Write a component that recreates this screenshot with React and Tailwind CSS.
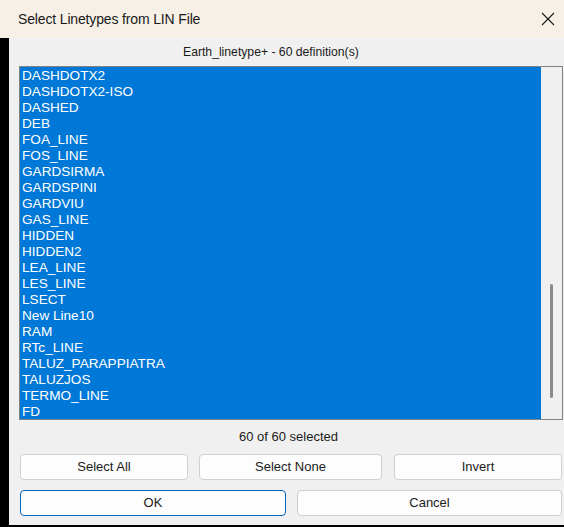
const items = [
  "DASHDOTX2",
  "DASHDOTX2-ISO",
  "DASHED",
  "DEB",
  "FOA_LINE",
  "FOS_LINE",
  "GARDSIRMA",
  "GARDSPINI",
  "GARDVIU",
  "GAS_LINE",
  "HIDDEN",
  "HIDDEN2",
  "LEA_LINE",
  "LES_LINE",
  "LSECT",
  "New Line10",
  "RAM",
  "RTc_LINE",
  "TALUZ_PARAPPIATRA",
  "TALUZJOS",
  "TERMO_LINE",
  "FD",
];

function Btn({ children, className = "" }) {
  return (
    <button className={`h-[26px] rounded-[4px] border bg-[#fdfdfd] text-[13px] text-[#1b1b1b] flex items-center justify-center ${className}`}>
      {children}
    </button>
  );
}

export default function App() {
  return (
    <div className="w-[564px] h-[527px] bg-black flex flex-col overflow-hidden font-['Liberation_Sans',Arial,sans-serif]">
      {/* title bar */}
      <div className="h-[38px] bg-[#f7f0e6] flex items-center pl-[18px] pr-[9px] shrink-0">
        <span className="text-[14px] text-[#1a1a1a] tracking-[-0.15px]">Select Linetypes from LIN File</span>
        <svg className="ml-auto" width="14" height="14" viewBox="0 0 14 14">
          <path d="M1 1 L13 13 M13 1 L1 13" stroke="#1a1a1a" strokeWidth="1.1" fill="none" />
        </svg>
      </div>

      <div className="flex h-[487px] shrink-0">
        <div className="w-[9px] bg-black" />
        <div className="flex-1 bg-[#f0f0f0] flex flex-col">
          <div className="h-[28px] flex items-center pl-[174px] text-[12.2px] text-[#1a1a1a]">
            Earth_linetype+ - 60 definition(s)
          </div>

          {/* list box */}
          <div className="ml-[10px] w-[544px] h-[354px] border border-[#828282] flex">
            <div className="w-[521px] bg-[#0078d7] flex flex-col">
              {items.map((t) => (
                <div key={t} className="h-[16px] leading-[17px] pl-[2px] text-[13.6px] text-white whitespace-nowrap">
                  {t}
                </div>
              ))}
            </div>
            <div className="flex-1 bg-[#f0f0f0] flex flex-col items-center">
              <div className="mt-[217px] w-[3px] h-[114px] rounded-full bg-[#8a8a8a] ml-[-1px]" />
            </div>
          </div>

          <div className="h-[34px] flex items-center justify-center pl-[4px] text-[13px] text-[#1a1a1a]">
            60 of 60 selected
          </div>

          <div className="flex ml-[11px] gap-[11px]">
            <Btn className="w-[168px] border-[#d0d0d0]">Select All</Btn>
            <Btn className="w-[183px] border-[#d0d0d0]">Select None</Btn>
            <Btn className="w-[168px] border-[#d0d0d0] ml-[1px]">Invert</Btn>
          </div>

          <div className="flex ml-[11px] gap-[11px] mt-[10px]">
            <Btn className="w-[266px] border-[#0067c0]">OK</Btn>
            <Btn className="w-[265px] border-[#d0d0d0]">Cancel</Btn>
          </div>
        </div>
      </div>
    </div>
  );
}
